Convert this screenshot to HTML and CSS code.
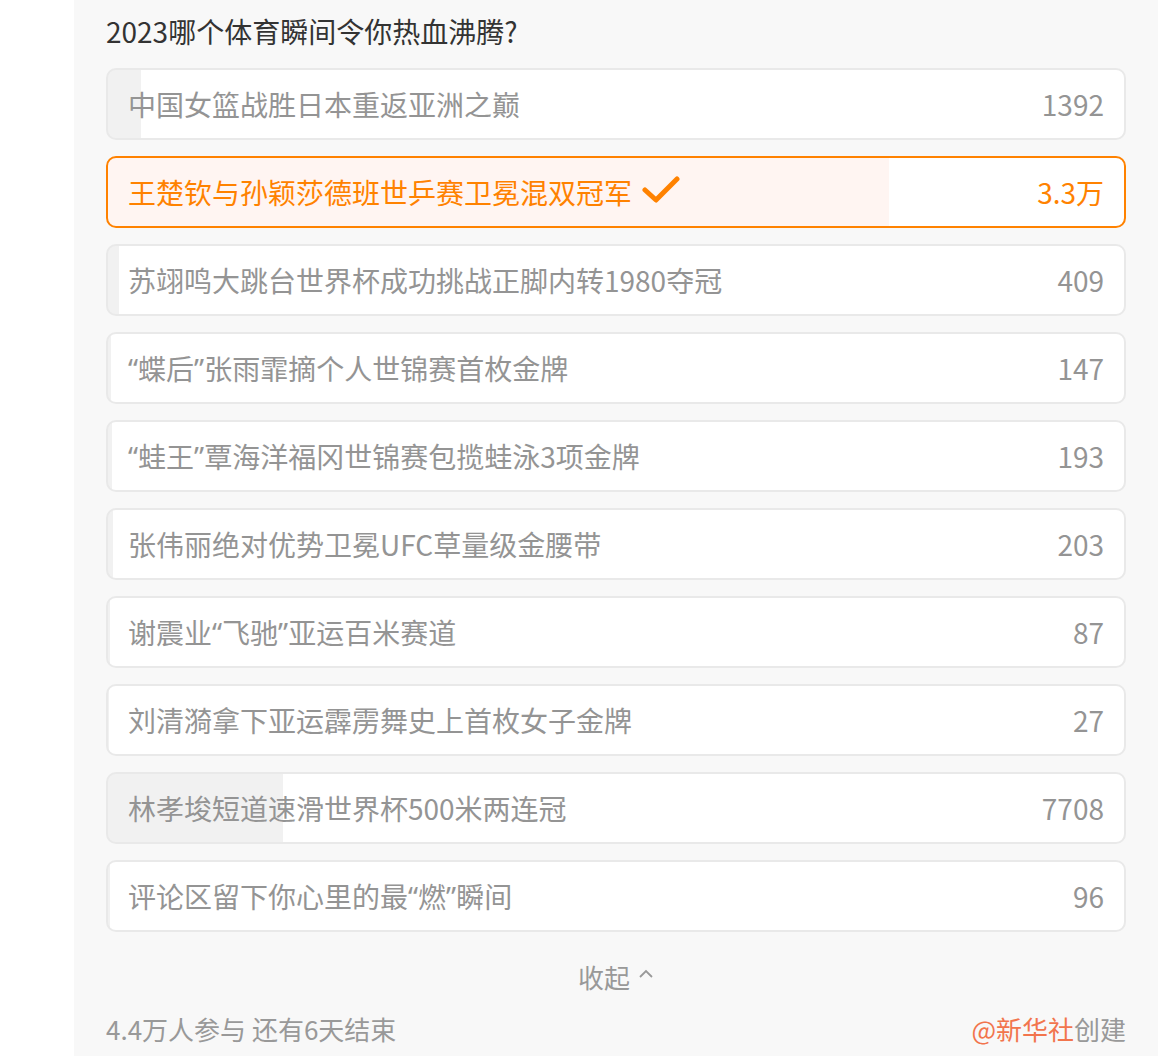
FILE: index.html
```html
<!DOCTYPE html>
<html lang="zh-CN">
<head>
<meta charset="utf-8">
<title>投票</title>
<link rel="stylesheet" href="styles.css">
</head>
<body>
<div class="panel">
  <div class="title">2023哪个体育瞬间令你热血沸腾?</div>
  <ul class="options">
    <li class="option" style="--p:3.2%"><span class="label">中国女篮战胜日本重返亚洲之巅</span><span class="count">1392</span></li>
    <li class="option selected" style="--p:76.9%"><span class="label">王楚钦与孙颖莎德班世乒赛卫冕混双冠军<svg class="check" width="38" height="30" viewBox="0 0 38 30"><path d="M3 14 L14 24 L35 3" fill="none" stroke="#ff8200" stroke-width="5" stroke-linecap="round" stroke-linejoin="round"/></svg></span><span class="count">3.3万</span></li>
    <li class="option" style="--p:1.1%"><span class="label">苏翊鸣大跳台世界杯成功挑战正脚内转1980夺冠</span><span class="count">409</span></li>
    <li class="option" style="--p:0.3%"><span class="label"><span class="q">“</span>蝶后<span class="q">”</span>张雨霏摘个人世锦赛首枚金牌</span><span class="count">147</span></li>
    <li class="option" style="--p:0.4%"><span class="label"><span class="q">“</span>蛙王<span class="q">”</span>覃海洋福冈世锦赛包揽蛙泳3项金牌</span><span class="count">193</span></li>
    <li class="option" style="--p:0.5%"><span class="label">张伟丽绝对优势卫冕UFC草量级金腰带</span><span class="count">203</span></li>
    <li class="option" style="--p:0.2%"><span class="label">谢震业<span class="q">“</span>飞驰<span class="q">”</span>亚运百米赛道</span><span class="count">87</span></li>
    <li class="option" style="--p:0.1%"><span class="label">刘清漪拿下亚运霹雳舞史上首枚女子金牌</span><span class="count">27</span></li>
    <li class="option" style="--p:17.2%"><span class="label">林孝埈短道速滑世界杯500米两连冠</span><span class="count">7708</span></li>
    <li class="option" style="--p:0.2%"><span class="label">评论区留下你心里的最<span class="q">“</span>燃<span class="q">”</span>瞬间</span><span class="count">96</span></li>
  </ul>
  <div class="collapse">收起<svg class="chev" width="16" height="10" viewBox="0 0 16 10"><path d="M2 8 L8 2 L14 8" fill="none" stroke="#999" stroke-width="1.8"/></svg></div>
  <div class="footer">
    <span class="stats">4.4万人参与 还有6天结束</span>
    <span class="creator"><span class="author">@新华社</span>创建</span>
  </div>
</div>
</body>
</html>
```

FILE: styles.css
```css
html, body {
  margin: 0;
  padding: 0;
  background: #ffffff;
}
body {
  font-family: "Noto Sans CJK SC", "Noto Sans", sans-serif;
}
.panel {
  margin-left: 74px;
  width: 1084px;
  box-sizing: border-box;
  background: #f8f8f8;
  padding: 11px 32px 6px;
  min-height: 1056px;
}
.title {
  font-size: 28px;
  line-height: 40px;
  color: #333333;
  margin-bottom: 17px;
}
.options {
  list-style: none;
  margin: 0;
  padding: 0;
  display: flex;
  flex-direction: column;
  gap: 16px;
}
.option {
  height: 72px;
  box-sizing: border-box;
  border: 2px solid #e9e9e9;
  border-radius: 10px;
  background: linear-gradient(to right, #f1f1f1 0, #f1f1f1 var(--p), #ffffff var(--p), #ffffff 100%);
  display: flex;
  align-items: center;
  justify-content: space-between;
  padding: 0 20px;
  font-size: 28px;
  color: #949494;
}
.option.selected {
  border-color: #ff8200;
  background: linear-gradient(to right, #fff5f2 0, #fff5f2 var(--p), #ffffff var(--p), #ffffff 100%);
  color: #ff8200;
}
.label {
  display: flex;
  align-items: center;
  white-space: nowrap;
}
.q {
  font-family: "Noto Sans", "DejaVu Sans", sans-serif;
}
.check {
  margin-left: 10px;
  margin-top: -2px;
}
.count {
  white-space: nowrap;
}
.collapse {
  margin-top: 24px;
  height: 40px;
  display: flex;
  align-items: center;
  justify-content: center;
  font-size: 26px;
  color: #999999;
  gap: 8px;
}
.chev {
  margin-top: -4px;
}
.footer {
  margin-top: 13px;
  display: flex;
  justify-content: space-between;
  align-items: center;
  font-size: 26px;
  line-height: 40px;
  color: #999999;
}
.author {
  color: #f2754d;
}
```
